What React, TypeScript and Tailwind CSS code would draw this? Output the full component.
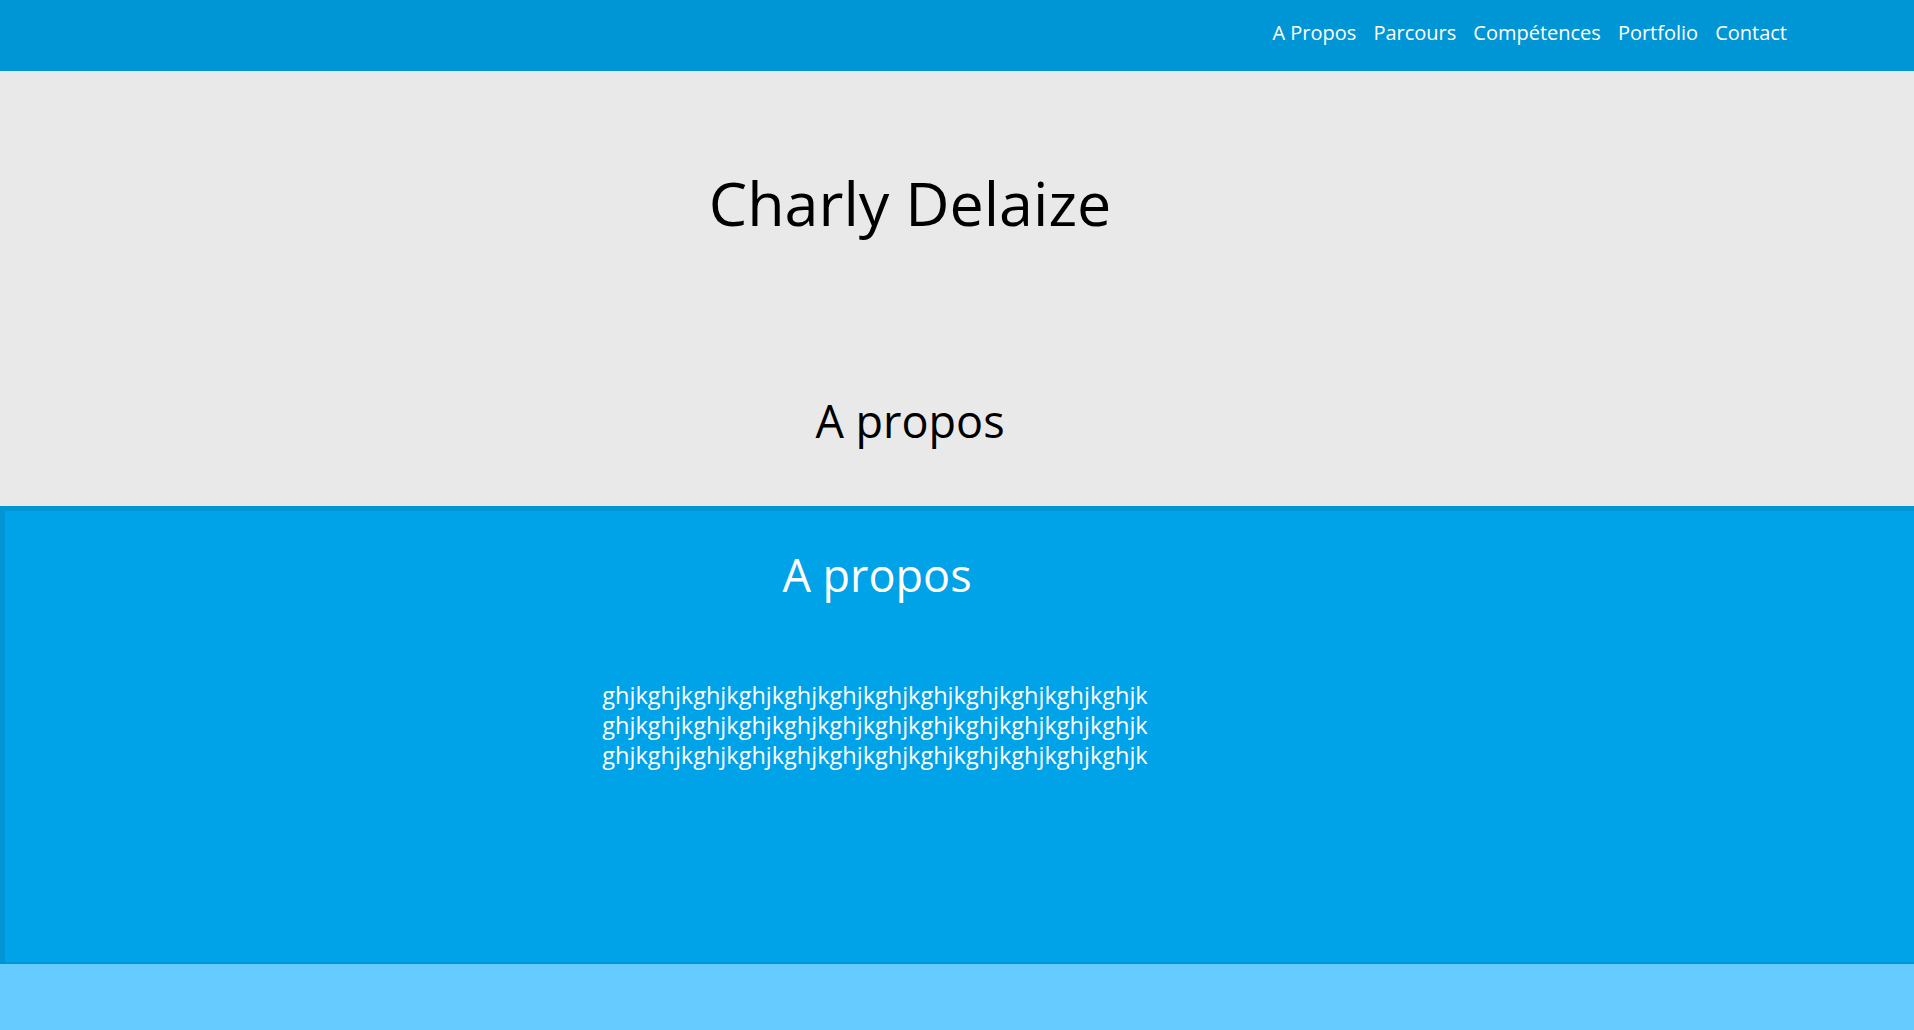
import React from "react";

const links = ["A Propos", "Parcours", "Compétences", "Portfolio", "Contact"];

const line = "ghjk".repeat(12);

export default function App() {
  return (
    <div className="min-h-[1030px] bg-[#66ccff] font-['Open_Sans',sans-serif]">
      {/* barre de navigation */}
      <nav className="flex h-[71px] items-center justify-end bg-[#0096d6] pb-[5px] pr-[127px]">
        <ul className="flex gap-[17px] text-[20px] text-white">
          {links.map((l) => (
            <li key={l}>
              <a href="#">{l}</a>
            </li>
          ))}
        </ul>
      </nav>

      {/* en-tête */}
      <header className="flex h-[435px] flex-col items-center bg-[#e9e9e9] pr-[94px] text-black">
        <h1 className="mt-[92px] text-[61px] leading-[80px]">Charly Delaize</h1>
        <h2 className="mt-[148px] text-[45px] leading-[60px]">A propos</h2>
      </header>

      {/* section a propos */}
      <section className="h-[458px] border-t-[5px] border-b-2 border-l-[5px] border-[#0096d6] bg-[#00a2e8] pr-[165px] text-white">
        <div className="flex flex-col items-center">
          <h2 className="mt-[34px] text-[45px] leading-[60px]">A propos</h2>
          <p className="mt-[75px] pr-[4px] text-[23.5px] leading-[30px]">
            {line}
            <br />
            {line}
            <br />
            {line}
          </p>
        </div>
      </section>
    </div>
  );
}
